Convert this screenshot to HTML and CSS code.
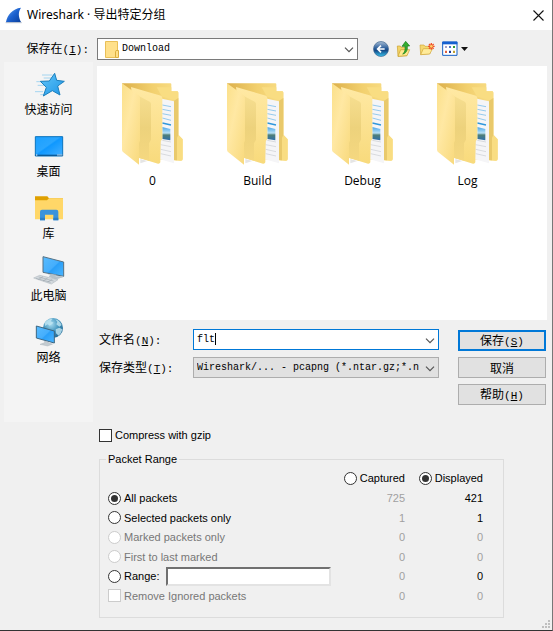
FILE: index.html
```html
<!DOCTYPE html>
<html lang="zh-CN">
<head>
<meta charset="utf-8">
<title>Wireshark · 导出特定分组</title>
<link rel="stylesheet" href="styles.css">
</head>
<body>
<svg class="defs" width="0" height="0" aria-hidden="true">
  <defs>
    <linearGradient id="fin" x1="0" y1="0" x2="1" y2="1"><stop offset="0" stop-color="#6aa8ee"/><stop offset=".5" stop-color="#1d62d0"/><stop offset="1" stop-color="#0a3f9c"/></linearGradient>
    <linearGradient id="back" x1="0" y1="0" x2="1" y2="0"><stop offset="0" stop-color="#dcb04c"/><stop offset=".5" stop-color="#f2d06e"/><stop offset="1" stop-color="#fae08c"/></linearGradient>
    <linearGradient id="front" x1="0" y1="0" x2="1" y2="1"><stop offset="0" stop-color="#fbe08a"/><stop offset=".4" stop-color="#ffe8a3"/><stop offset="1" stop-color="#f8d97c"/></linearGradient>
    <linearGradient id="mid" x1="0" y1="0" x2="0" y2="1"><stop offset="0" stop-color="#ffe9a4"/><stop offset="1" stop-color="#f8da7c"/></linearGradient>
    <linearGradient id="fold" x1="0" y1="0" x2="0" y2="1"><stop offset="0" stop-color="#f6de90"/><stop offset=".5" stop-color="#edd27c"/><stop offset="1" stop-color="#f5d880"/></linearGradient>
    <linearGradient id="photo" x1="0" y1="0" x2="0" y2="1"><stop offset="0" stop-color="#4aa6e8"/><stop offset=".45" stop-color="#b9e0f6"/><stop offset=".6" stop-color="#4f7f78"/><stop offset="1" stop-color="#2d6fae"/></linearGradient>
    <linearGradient id="screen" x1="0" y1="0" x2="1" y2="1"><stop offset="0" stop-color="#1ba0ff"/><stop offset=".45" stop-color="#2aa6ff"/><stop offset=".5" stop-color="#0f98ff"/><stop offset="1" stop-color="#45b0ff"/></linearGradient>
    <linearGradient id="glass" x1="0" y1="0" x2="1" y2="1"><stop offset="0" stop-color="#58bcff"/><stop offset=".5" stop-color="#45aefc"/><stop offset=".55" stop-color="#2a9ff8"/><stop offset="1" stop-color="#4cb6ff"/></linearGradient>
    <linearGradient id="star" x1="0" y1="0" x2="1" y2="1"><stop offset="0" stop-color="#63c6f8"/><stop offset="1" stop-color="#1c94e6"/></linearGradient>
    <radialGradient id="globe" cx=".4" cy=".3" r=".75"><stop offset="0" stop-color="#a9dcf0"/><stop offset=".5" stop-color="#4798c0"/><stop offset="1" stop-color="#1f6590"/></radialGradient>
    <linearGradient id="orb" x1="0" y1="0" x2="0" y2="1"><stop offset="0" stop-color="#a8bdd4"/><stop offset=".45" stop-color="#2c5f9c"/><stop offset=".6" stop-color="#154a88"/><stop offset="1" stop-color="#38c4ee"/></linearGradient>
    <symbol id="folder" viewBox="60 36 195 252">
      <path fill="url(#back)" d="M66 40H211Q214 40 214 43V64H232Q235 65 235 68V194L248 208V267Q248 272 243 272L118 264Z"/>
      <path fill="#f9dd82" d="M170 52H214V64H232Q235 65 235 68V194L248 208V267Q248 272 243 272L222 270V90L186 80Z"/>
      <path fill="#e9c96b" d="M222 92L235 84V194L231 204V271L222 270Z"/>
      <path fill="#f5f5f7" d="M186 86L222 94V280L180 268Z"/>
      <path fill="none" stroke="#7fc0ea" stroke-width="2.5" d="M187 105L213 110M187 118L213 123M187 131L213 136M187 144L213 151"/>
      <path fill="none" stroke="#2f97dc" stroke-width="4" d="M187 159L213 165"/>
      <path fill="url(#photo)" d="M187 171L211 177V211L187 207Z"/>
      <path fill="none" stroke="#c9cbd0" stroke-width="2" d="M187 211L213 216M182 224L213 230M182 238L213 245M182 251L213 258"/>
      <path fill="url(#mid)" d="M93 51L183 77Q187 79 187 84V207L181 215V277Q179 282 174 281L118 264Z"/>
      <path fill="url(#fold)" d="M112 76L149 95Q153 97 153 102V209L147 220V272L118 264Z"/>
      <path fill="url(#front)" d="M66 40L116 76Q120 79 120 84V212L117 219V284L70 247Q66 244 66 239Z"/>
      <path fill="#e5e5e5" d="M121 267L142 273 121 280Z"/>
    </symbol>
    <symbol id="chevron" viewBox="0 0 10 6"><path d="M1 .7L5 4.7L9 .7" fill="none" stroke="#555" stroke-width="1.2"/></symbol>
  </defs>
</svg>

<main class="dialog">
  <header class="titlebar">
    <svg class="fin" viewBox="16 18 51 51" aria-hidden="true"><path d="M19 63C23 42 38 23 64 20C55 33 56 48 64 63Z" fill="url(#fin)"/><path d="M18 65H66" stroke="#aab6c8" stroke-width="3"/></svg>
    <h1>Wireshark · 导出特定分组</h1>
    <button class="close" type="button" aria-label="关闭"><svg viewBox="0 0 11 11"><path d="M.5 .5L10.5 10.5M10.5 .5L.5 10.5" stroke="#111" stroke-width="1.1"/></svg></button>
  </header>

  <div class="lookin">
    <label for="dir">保存在<span class="key">(<u>I</u>):</span></label>
    <div class="combo has-icon">
      <svg class="mini" viewBox="0 0 14 17" aria-hidden="true"><path d="M.5 .5H12.5V16.5H.5Z" fill="#ffe08a" stroke="#e9bf57"/><path d="M10.5 10.5Q10.5 9.500 12 9.500H13.500V16.500H10.500Z" fill="#ffe08a" stroke="#dcae3d"/></svg>
      <select id="dir"><option>Download</option></select>
      <svg class="arrow"><use href="#chevron"/></svg>
    </div>
    <div class="tools">
      <button type="button" aria-label="后退"><svg viewBox="309 124 48 48"><circle cx="333" cy="148" r="22.500" fill="url(#orb)" stroke="#3d648e" stroke-width="2"/><path d="M344 148H325M333 138L323 148L333 158" fill="none" stroke="#fff" stroke-width="5"/></svg></button>
      <button type="button" aria-label="向上"><svg viewBox="378 124 48 48"><path d="M382 139H391L394 143H410V168L384 170Z" fill="#f3d468" stroke="#c99f2e" stroke-width="2"/><path d="M384 170L392 150H419L411 168Z" fill="#ffe98e" stroke="#c99f2e" stroke-width="2"/><path d="M398 163C405 158 406 151 405 140H396L407 125L419 139H412C413 152 409 161 398 163Z" fill="#35ad31" stroke="#167c1a" stroke-width="2"/></svg></button>
      <button type="button" aria-label="新建文件夹"><svg viewBox="448 124 48 48"><path d="M451 136H463L466 140H481V162L453 165Z" fill="#f5d86e" stroke="#d0a63b" stroke-width="2"/><path d="M453 165L461 147H489L480 163Z" fill="#ffeb9a" stroke="#d0a63b" stroke-width="2"/><path d="M485 130V150M475 140H495M478 133L492 147M492 133L478 147" stroke="#f0552a" stroke-width="4"/><circle cx="485" cy="140" r="4" fill="#ffd36a"/></svg></button>
      <button class="views" type="button" aria-label="视图"><svg viewBox="518 124 48 48"><path d="M520 127H563V167H520Z" fill="#fff" stroke="#1560c4" stroke-width="3"/><path d="M519 126H564V134H519Z" fill="#1560d0"/><path fill="#a9a0c4" d="M527 139H533V145H527Z"/><path fill="#4a76c8" d="M539 139H545V145H539Z"/><path fill="#2f9a32" d="M551 139H557V145H551Z"/><path fill="#e2603c" d="M527 153H533V160H527Z"/><path fill="#1c3b9c" d="M539 153H545V160H539Z"/><path fill="#c0a032" d="M551 153H557V160H551Z"/></svg><svg class="caret-down" viewBox="0 0 7 4"><path d="M0 0H7L3.500 4Z" fill="#111"/></svg></button>
    </div>
  </div>

  <div class="browse">
    <nav class="places">
      <a href="#quick"><svg viewBox="96 20 96 96"><path d="M123 38H154M128 47H152M106 58H130M110 69H136M102 88H126M118 97H130" stroke="#7cc6ee" stroke-width="2"/><path d="M161 33L167 54L190 57L170 71L177 98L154 85L127 101L136 75L118 57L145 56Z" fill="url(#star)" stroke="#1b7fbd" stroke-width="3"/></svg>快速访问</a>
      <a href="#desktop"><svg viewBox="96 206 96 96"><path d="M103 223H185V281H103Z" fill="url(#screen)" stroke="#0b74bd" stroke-width="3"/><path d="M103 279H186" stroke="#0b5a98" stroke-width="4"/><path d="M105 278H109M169 278H173M175 278H179M181 278H184" stroke="#fff" stroke-width="3"/></svg>桌面</a>
      <a href="#library"><svg viewBox="96 392 96 96"><path d="M102 402H139L144 408H186V430H102Z" fill="#dfa000"/><path d="M102 414H138L144 408H186V471H102Z" fill="#ffd768"/><path d="M117 474V448Q117 442 123 442H166Q172 442 172 448V474H157V457H132V474Z" fill="#3a93dc"/><path d="M117 474V466H132V474ZM157 474V466H172V474Z" fill="#2b7ec6"/></svg>库</a>
      <a href="#computer"><svg viewBox="96 45 96 96"><path d="M140 103L168 94L188 110L164 119Z" fill="#d2d9de"/><path d="M126 50L188 66V109L126 97Z" fill="url(#glass)" stroke="#547184" stroke-width="3"/><path d="M152 102L165 104L164 110L185 108L186 112L164 118L143 110Z" fill="#b7c2c9"/><path d="M98 114L116 106L171 119L151 132Z" fill="#d4dade" stroke="#a5afb6" stroke-width="1.500"/><path d="M105 115L149 127M113 111L158 123M112 119L126 110M126 123L140 114M140 126L154 118" stroke="#949fa7" stroke-width="1.500"/></svg>此电脑</a>
      <a href="#network"><svg viewBox="96 231 96 96"><circle cx="156" cy="264" r="30" fill="url(#globe)"/><path d="M131 248Q142 235 155 236L149 244L158 248L146 257L140 253L132 258ZM163 238Q176 242 182 255L175 260L166 253L169 246ZM164 268L175 263L184 268Q182 280 173 287L165 280Z" fill="#c2e6f2" opacity=".8"/><path d="M106 258L160 273V309L106 294Z" fill="url(#glass)" stroke="#3d6680" stroke-width="3"/><path d="M131 303L142 306V309L155 312L140 318L117 313L131 308Z" fill="#c3cbd0" stroke="#98a4ac"/></svg>网络</a>
    </nav>

    <div class="content">
      <ul class="files">
        <li><svg><use href="#folder"/></svg>0</li>
        <li><svg><use href="#folder"/></svg>Build</li>
        <li><svg><use href="#folder"/></svg>Debug</li>
        <li><svg><use href="#folder"/></svg>Log</li>
      </ul>

      <div class="form">
        <div class="fields">
          <label for="name">文件名<span class="key">(<u>N</u>):</span></label>
          <div class="combo active">
            <input id="name" type="text" value="flt" spellcheck="false">
            <span class="caret"></span>
            <svg class="arrow"><use href="#chevron"/></svg>
          </div>
          <label for="type">保存类型<span class="key">(<u>T</u>):</span></label>
          <div class="combo gray">
            <select id="type"><option>Wireshark/... - pcapng (*.ntar.gz;*.n</option></select>
            <svg class="arrow"><use href="#chevron"/></svg>
          </div>
        </div>
        <div class="actions">
          <button class="default" type="button">保存<span class="key">(<u>S</u>)</span></button>
          <button type="button">取消</button>
          <button type="button">帮助<span class="key">(<u>H</u>)</span></button>
        </div>
      </div>
    </div>
  </div>

  <section class="options">
    <label class="opt"><input type="checkbox">Compress with gzip</label>
    <fieldset>
      <legend>Packet Range</legend>
      <table>
        <thead>
          <tr><td></td><th><label class="opt"><input type="radio" name="set">Captured</label></th><th><label class="opt"><input type="radio" name="set" checked>Displayed</label></th></tr>
        </thead>
        <tbody>
          <tr><td><label class="opt"><input type="radio" name="range" checked>All packets</label></td><td class="off">725</td><td>421</td></tr>
          <tr><td><label class="opt"><input type="radio" name="range">Selected packets only</label></td><td class="off">1</td><td>1</td></tr>
          <tr><td><label class="opt dim"><input type="radio" name="range" disabled>Marked packets only</label></td><td class="off">0</td><td class="off">0</td></tr>
          <tr><td><label class="opt dim"><input type="radio" name="range" disabled>First to last marked</label></td><td class="off">0</td><td class="off">0</td></tr>
          <tr><td><div class="rangerow"><label class="opt"><input type="radio" name="range">Range:</label><input class="range" type="text" aria-label="Range"></div></td><td class="off">0</td><td>0</td></tr>
          <tr><td><label class="opt dim"><input type="checkbox" disabled>Remove Ignored packets</label></td><td class="off">0</td><td class="off">0</td></tr>
        </tbody>
      </table>
    </fieldset>
  </section>

  <footer class="grip"><svg viewBox="0 0 8 8" aria-hidden="true"><path d="M6 0H8V2H6ZM3 3H5V5H3ZM6 3H8V5H6ZM0 6H2V8H0ZM3 6H5V8H3ZM6 6H8V8H6Z" fill="#bfbfbf"/></svg></footer>
</main>
</body>
</html>
```
FILE: styles.css
```css
* {
  box-sizing: border-box;
}

body {
  margin: 0;
  color: #000;
  font: 12px/16px "Noto Sans CJK SC", sans-serif;
}

button,
input,
select {
  margin: 0;
  padding: 0;
  border: 0;
  border-radius: 0;
  color: inherit;
  font: inherit;
}

svg {
  display: block;
  flex: none;
}

.defs {
  position: absolute;
}

.dialog {
  display: flex;
  flex-direction: column;
  min-height: 100vh;
  background: #f0f0f0;
  border-right: 1px solid #777;
  border-bottom: 1px solid #333;
}

/* Title bar */
.titlebar {
  display: flex;
  align-items: center;
  height: 30px;
  padding: 0 8px 0 5px;
  background: #fff;
}

.fin {
  width: 17px;
  height: 17px;
}

.titlebar h1 {
  flex: 1;
  margin: 0 0 0 5px;
  font: 12px/16px "Noto Sans", "Noto Sans CJK SC", sans-serif;
}

.close {
  background: none;
}

.close svg {
  width: 11px;
  height: 11px;
}

/* Folder row */
.lookin {
  display: flex;
  align-items: center;
  height: 32px;
  padding: 6px 5px 0 0;
}

.lookin > label {
  width: 97px;
  padding: 0 8px 0 0;
  text-align: right;
}

.key {
  font: 11px/16px "Liberation Mono", monospace;
}

.combo {
  position: relative;
  flex: 1;
  height: 22px;
  background: #fff;
  border: 1px solid #7a7a7a;
}

.combo select,
.combo input {
  display: block;
  width: 100%;
  height: 100%;
  padding: 0 18px 0 3px;
  appearance: none;
  background: transparent;
  outline: 0;
  font: 10px/16px "Liberation Mono", monospace;
}

.combo.has-icon select {
  padding-left: 24px;
}

.mini {
  position: absolute;
  left: 7px;
  top: 2px;
  width: 14px;
  height: 17px;
}

.arrow {
  position: absolute;
  right: 3px;
  top: 8px;
  width: 10px;
  height: 6px;
  pointer-events: none;
}

.caret {
  position: absolute;
  left: 21px;
  top: 3px;
  width: 1px;
  height: 12px;
  background: #000;
}

.combo.active {
  border-color: #0078d7;
}

.combo.gray {
  background: #e1e1e1;
  border-color: #adadad;
}

.tools {
  display: flex;
  gap: 7px;
  width: 189px;
  padding-left: 15px;
}

.tools button {
  display: flex;
  align-items: center;
  gap: 3px;
  background: none;
}

.tools svg {
  width: 16px;
  height: 16px;
}

.tools .caret-down {
  width: 7px;
  height: 4px;
}

/* Places and files */
.browse {
  display: flex;
  padding: 0 5px 0 4px;
}

.places {
  display: flex;
  flex-direction: column;
  gap: 14px;
  width: 89px;
  min-height: 360px;
  padding-top: 7px;
  background: #f4f4f4;
}

.places a {
  display: flex;
  flex-direction: column;
  align-items: center;
  color: inherit;
  text-decoration: none;
}

.places svg {
  width: 32px;
  height: 32px;
}

.content {
  flex: 1;
  padding: 4px 0 0 4px;
}

.files {
  display: flex;
  flex-wrap: wrap;
  min-height: 254px;
  margin: 0;
  padding: 16px 3px 0;
  background: #fff;
  list-style: none;
  font-family: "Open Sans", sans-serif;
}

.files li {
  display: flex;
  flex-direction: column;
  align-items: center;
  gap: 7px;
  width: 105px;
}

.files svg {
  width: 65px;
  height: 84px;
}

/* File name form */
.form {
  display: flex;
  gap: 19px;
  padding: 9px 1px 0 2px;
}

.fields {
  display: grid;
  flex: 1;
  grid-template-columns: 94px 1fr;
  grid-auto-rows: 21px;
  gap: 7px 0;
  align-content: start;
  align-items: center;
}

.fields .combo {
  height: 21px;
}

.actions {
  display: flex;
  flex-direction: column;
  gap: 6px;
  width: 88px;
  padding-top: 1px;
}

.actions button {
  height: 21px;
  background: #e1e1e1;
  border: 1px solid #adadad;
}

.actions .default {
  border: 2px solid #0078d7;
}

/* Packet options */
.options {
  padding: 5px 48px 0 99px;
  font: 11px/16px "Liberation Sans", sans-serif;
}

.opt {
  display: flex;
  align-items: center;
  gap: 3px;
  white-space: nowrap;
}

.opt.dim {
  color: #777;
}

.opt input {
  display: grid;
  flex: none;
  place-items: center;
  width: 13px;
  height: 13px;
  appearance: none;
  background: #fff;
  border: 1px solid #333;
}

.opt input[type="radio"] {
  border-radius: 50%;
}

.opt input:checked::before {
  content: "";
  width: 7px;
  height: 7px;
  border-radius: 50%;
  background: #333;
}

.opt input:disabled {
  border-color: #ccc;
}

fieldset {
  margin: 8px 0 0;
  padding: 1px 20px 12px 8px;
  border: 1px solid #dcdcdc;
}

legend {
  margin-left: -2px;
  padding: 0 2px;
}

table {
  width: 100%;
  border-collapse: collapse;
}

th,
td {
  height: 20px;
  padding: 0;
  font-weight: normal;
  text-align: right;
}

tbody tr:nth-child(even) td {
  height: 19px;
}

td:first-child {
  text-align: left;
}

th:nth-child(2) {
  width: 60px;
}

th:nth-child(3) {
  width: 78px;
}

th .opt {
  justify-content: flex-end;
}

td.off {
  color: #a0a0a0;
}

.rangerow {
  display: flex;
  align-items: center;
  gap: 7px;
}

.range {
  width: 165px;
  height: 19px;
  background: #fff;
  border: 2px solid;
  border-color: #707070 #e3e3e3 #e3e3e3 #707070;
}

.grip {
  display: flex;
  justify-content: flex-end;
  margin-top: auto;
  padding: 0 2px 2px;
}

.grip svg {
  width: 8px;
  height: 8px;
}
```
